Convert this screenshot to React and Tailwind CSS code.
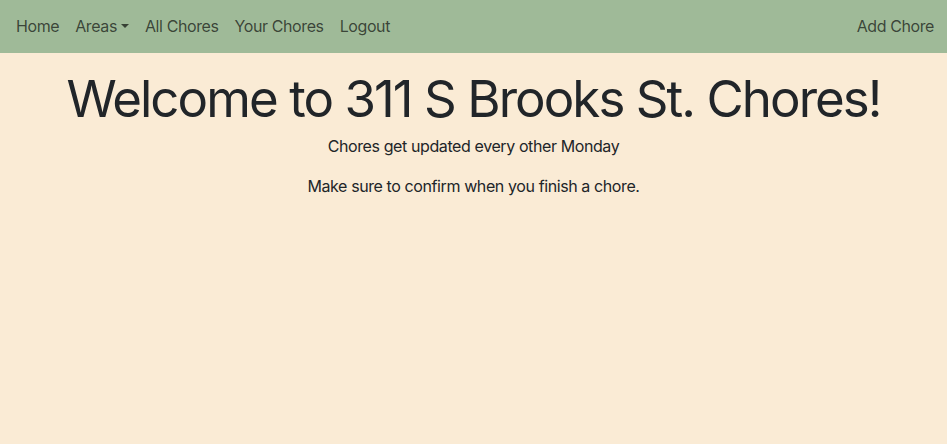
import React from "react";

const App = () => {
  const links = ["Home", "Areas", "All Chores", "Your Chores", "Logout"];

  return (
    <div
      className="min-h-screen bg-[#faebd5] text-[#212529] tracking-[-0.025em]"
      style={{ fontFamily: "Inter, 'Noto Sans', sans-serif" }}>
      <nav className="h-[53px] bg-[#9fba98] flex items-center justify-between pl-4 pr-[13px] pb-0.5">
        <ul className="flex items-center gap-4">
          {links.map((l) => (
            <li key={l} className="text-base text-black/65 flex items-center">
              {l}
              {l === "Areas" && (
                <span className="ml-[4px] inline-block w-0 h-0 border-x-[4px] border-x-transparent border-t-[4px] border-t-black/65" />
              )}
            </li>
          ))}
        </ul>
        <span className="text-base text-black/65">Add Chore</span>
      </nav>

      <div className="text-center pt-[18px]">
        <h1 className="text-[51px] leading-[55px] font-normal mb-2 tracking-[-0.038em]">
          Welcome to 311 S Brooks St. Chores!
        </h1>
        <p className="text-base leading-6 mb-4">Chores get updated every other Monday</p>
        <p className="text-base leading-6 mb-4">Make sure to confirm when you finish a chore.</p>
      </div>
    </div>
  );
};

export default App;
